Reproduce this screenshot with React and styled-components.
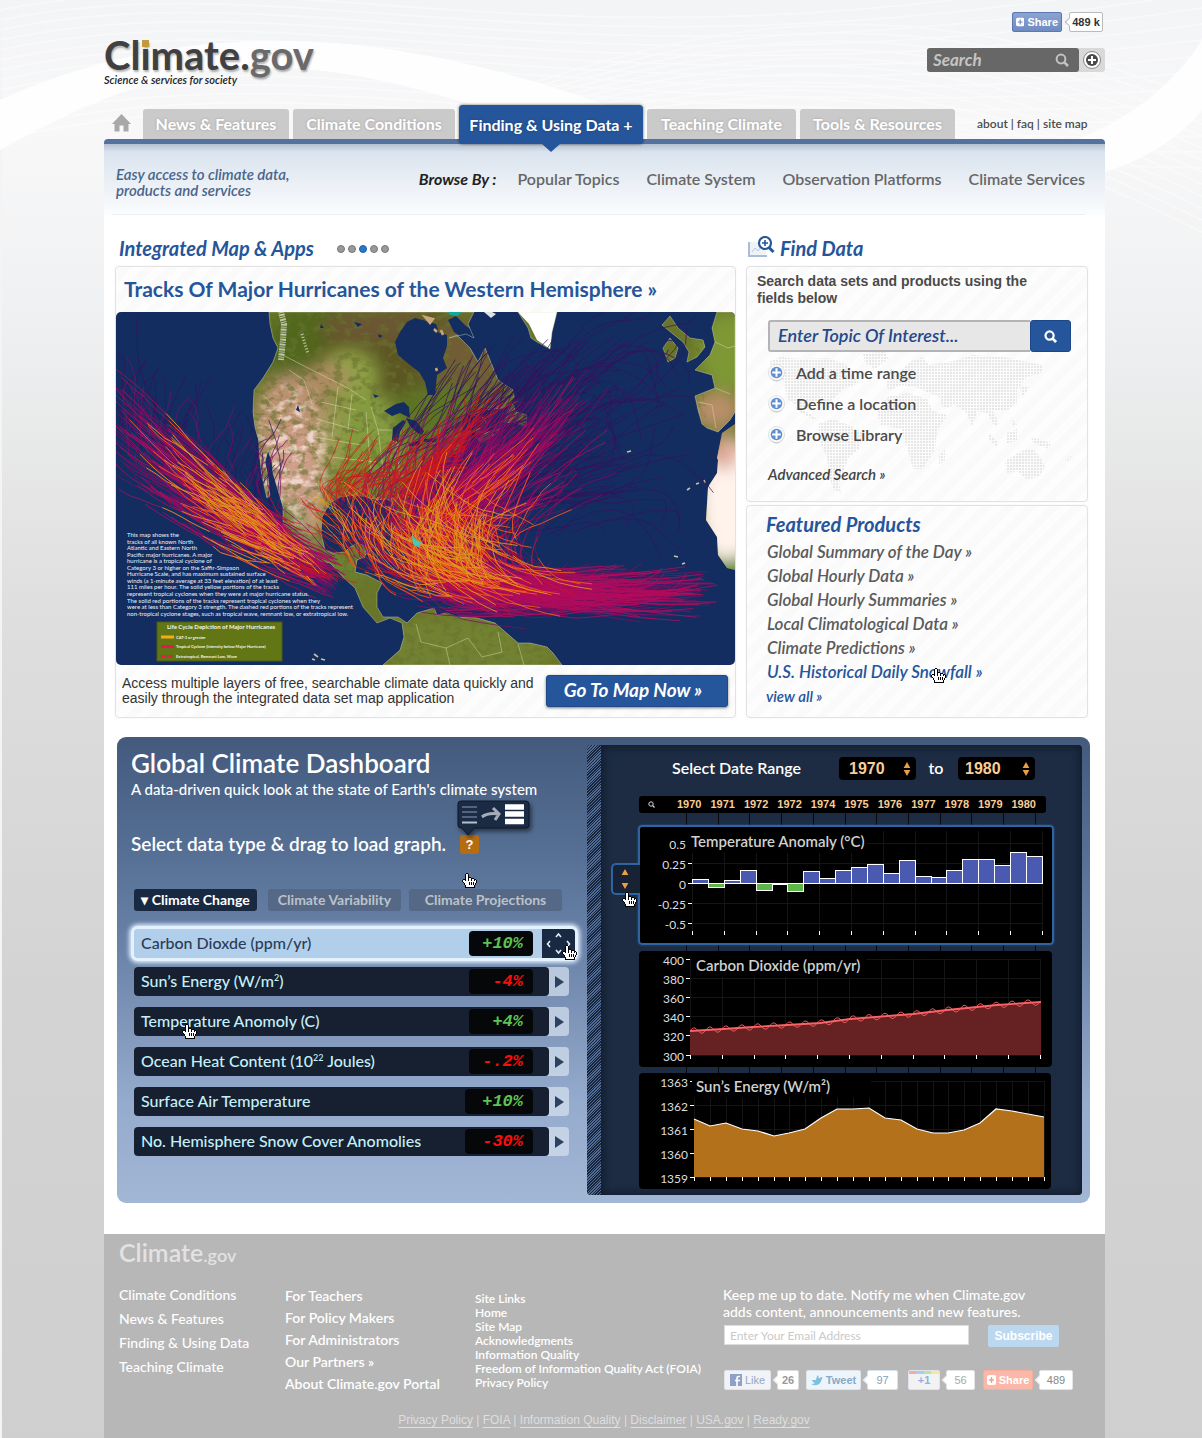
import React from "react";
import styled, { createGlobalStyle, css } from "styled-components";

const sans = `Lato, "Open Sans", sans-serif`;
const arial = `"Liberation Sans", Arial, sans-serif`;
const blue = "#25559a";

const Global = createGlobalStyle`
  *, *::before, *::after { box-sizing: border-box; }
  body { margin: 0; background: #d0d0d0; }
  a { color: inherit; text-decoration: none; }
  h1, h2, h3, p, ul { margin: 0; padding: 0; }
  ul { list-style: none; }
  button { cursor: pointer; }
`;

/* ---------- deterministic pseudo random, for the generated drawings ---------- */
function makeRandom(seed) {
  let s = seed;
  return () => {
    s = (s * 1664525 + 1013904223) % 4294967296;
    return s / 4294967296;
  };
}

/* ---------- page shell ---------- */
const Page = styled.div`
  position: relative;
  isolation: isolate;
  padding: 0 97px 0 104px;
  font-family: ${sans};
  background: linear-gradient(#f3f4f6 0, #f8f8f9 130px, #f0f1f2 300px, #dedede 620px, #d3d3d3 1000px, #cfcfcf 100%);
  box-shadow: inset 2px 0 0 #f4f4f5;
`;
const Waves = styled.svg`
  position: absolute;
  inset: 0 0 auto 0;
  width: 100%;
  height: 420px;
  z-index: -1;
`;

/* ---------- header ---------- */
const Header = styled.header`
  display: flex;
  justify-content: space-between;
  height: 104px;
`;
const Brand = styled.a`
  display: block;
  padding-top: 36px;
`;
const Logo = styled.h1`
  font: 700 40px/38px ${sans};
  color: #404042;
  text-shadow: 1px 2px 2px rgba(0, 0, 0, 0.3);
`;
const Gray = styled.span`
  color: #6a6a6c;
`;
const GoldI = styled.span`
  position: relative;
  &::before {
    content: "";
    position: absolute;
    left: 2px;
    top: 9px;
    width: 7px;
    height: 7px;
    background: #c29a3c;
  }
`;
const Motto = styled.p`
  font: italic 600 11px/12px ${sans};
  color: #222;
`;
const HeaderTools = styled.div`
  display: flex;
  flex-direction: column;
  align-items: flex-end;
  gap: 16px;
  padding-top: 12px;
`;
const ShareRow = styled.div`
  display: flex;
  gap: 7px;
  padding-right: 2px;
`;
const ShareButton = styled.button`
  display: flex;
  align-items: center;
  gap: 3px;
  width: 50px;
  height: 20px;
  padding: 0 3px;
  border: 1px solid #5a78b4;
  border-radius: 2px;
  background: linear-gradient(#8ba3d0, #6f8bc2);
  color: #fff;
  font: 700 11px/18px ${arial};
`;
const Bubble = styled.span`
  position: relative;
  display: grid;
  place-items: center;
  width: ${(p) => p.$w}px;
  height: 20px;
  border: 1px solid ${(p) => p.$line || "#bbb"};
  border-radius: 2px;
  background: #fff;
  color: ${(p) => p.$ink || "#333"};
  font: ${(p) => (p.$bold ? 700 : 400)} 11px/18px ${arial};
  &::before {
    content: "";
    position: absolute;
    left: -4px;
    top: 6px;
    width: 6px;
    height: 6px;
    background: #fff;
    border-left: 1px solid ${(p) => p.$line || "#bbb"};
    border-bottom: 1px solid ${(p) => p.$line || "#bbb"};
    transform: rotate(45deg);
  }
`;
const SiteSearch = styled.form`
  display: flex;
  width: 178px;
  height: 24px;
  border-radius: 3px;
  background: #d9d9da;
`;
const SiteSearchBox = styled.label`
  display: flex;
  align-items: center;
  width: 152px;
  padding: 0 10px 0 6px;
  border-radius: 3px;
  background: #676767;
`;
const SiteSearchInput = styled.input`
  flex: 1;
  min-width: 0;
  padding: 0;
  border: 0;
  outline: 0;
  background: none;
  color: #ddd;
  font: italic 700 17px/22px ${sans};
  &::placeholder { color: #c4c4c4; opacity: 1; }
`;
const PlusButton = styled.button`
  display: grid;
  place-items: center;
  flex: 1;
  padding: 0;
  border: 0;
  background: none;
`;

/* ---------- navigation ---------- */
const Nav = styled.nav`
  display: flex;
  align-items: flex-end;
  height: 35px;
`;
const HomeLink = styled.a`
  width: 39px;
  padding: 0 0 3px 7px;
`;
const Tab = styled.a`
  flex: 0 1 ${(p) => p.$w}px;
  display: flex;
  align-items: center;
  justify-content: center;
  height: 30px;
  margin-right: 4px;
  border-radius: 3px 3px 0 0;
  background: #cacaca;
  color: #fff;
  font: 700 16px/20px ${sans};
  white-space: nowrap;
  text-shadow: 0 0 3px rgba(0, 0, 0, 0.2);
  ${(p) =>
    p.$active &&
    css`
      position: relative;
      z-index: 2;
      height: 39px;
      margin-bottom: -5px;
      border-radius: 4px;
      background: ${blue};
      box-shadow: 0 0 3px rgba(0, 0, 0, 0.6);
      &::after {
        content: "";
        position: absolute;
        left: 50%;
        top: 39px;
        margin-left: -9px;
        border: 9px solid transparent;
        border-top: 8px solid ${blue};
        border-bottom: 0;
      }
    `}
`;
const Utility = styled.p`
  padding: 0 0 7px 18px;
  color: #4c4c4c;
  font: 600 12px/16px ${sans};
  white-space: nowrap;
`;

/* ---------- content sheet ---------- */
const Sheet = styled.main`
  display: flow-root;
  background: #fff;
  border-top: 5px solid #5472a0;
  border-radius: 4px 4px 0 0;
`;
const SubHeader = styled.section`
  padding: 0 20px 0 8px;
  background: linear-gradient(rgba(60, 80, 110, 0.22), transparent 8px), linear-gradient(#d6e0ec, #ffffff 78px);
`;
const SubHeaderInner = styled.div`
  display: flex;
  align-items: flex-start;
  justify-content: space-between;
  height: 71px;
  padding: 22px 0 0 4px;
  border-bottom: 1px solid #eceff3;
`;
const Lead = styled.p`
  width: 200px;
  color: #4a658c;
  font: italic 600 15px/16px ${sans};
`;
const Browse = styled.div`
  display: flex;
  gap: 27px;
  padding-top: 3px;
  color: #666;
  font: 600 16px/20px ${sans};
  white-space: nowrap;
`;
const BrowseLabel = styled.span`
  margin-right: -6px;
  color: #222;
  font-style: italic;
  font-weight: 700;
`;
const Columns = styled.div`
  display: grid;
  grid-template-columns: 621fr 342fr;
  gap: 10px;
  padding: 0 17px 19px 11px;
`;
const Column = styled.section`
  display: flex;
  flex-direction: column;
  min-width: 0;
`;
const HeadingRow = styled.div`
  display: flex;
  align-items: center;
  gap: ${(p) => p.$gap}px;
  height: 51px;
  padding: 15px 0 0 ${(p) => p.$inset}px;
`;
const Heading = styled.h2`
  color: ${blue};
  font: italic 700 20px/24px ${sans};
  white-space: nowrap;
`;
const Dots = styled.div`
  display: flex;
  gap: 3px;
  padding-top: 2px;
`;
const Dot = styled.button`
  width: 8px;
  height: 8px;
  padding: 0;
  border: 1px solid ${(p) => (p.$on ? "#1b5fae" : "#777")};
  border-radius: 50%;
  background: ${(p) => (p.$on ? "#2a78c8" : "#999")};
`;
const Card = styled.div`
  border: 1px solid #e2e2e2;
  border-radius: 4px;
  background: repeating-linear-gradient(-45deg, #fdfdfd 0 8px, #fafafa 8px 16px);
  box-shadow: 0 0 2px #eee;
`;
const MapCard = styled(Card)`
  height: 452px;
`;
const MapTitle = styled.h3`
  padding: 7px 0 8px 8px;
  color: ${blue};
  font: 700 21px/30px ${sans};
`;
const MapSvg = styled.svg`
  display: block;
  width: 100%;
  height: 353px;
  border-radius: 5px;
`;
const MapFoot = styled.div`
  display: flex;
  align-items: flex-start;
  justify-content: space-between;
  padding: 10px 7px 0 6px;
`;
const MapText = styled.p`
  padding-top: 1px;
  color: #333;
  font: 400 14px/15px ${arial};
`;
const GoButton = styled.button`
  width: 182px;
  height: 32px;
  padding: 0 8px 2px 0;
  border: 1px solid #1e4a88;
  border-radius: 3px;
  background: ${blue};
  box-shadow: 0 1px 3px rgba(0, 0, 0, 0.5);
  color: #fff;
  font: italic 700 19px/24px ${sans};
  white-space: nowrap;
`;

/* ---------- find data ---------- */
const FindCard = styled(Card)`
  position: relative;
  height: 236px;
  margin-bottom: 3px;
  padding: 6px 16px 0 10px;
`;
const World = styled.svg`
  position: absolute;
  left: 20px;
  top: 84px;
`;
const FindIntro = styled.p`
  width: 290px;
  color: #4a4a4a;
  font: 700 14px/17px ${arial};
`;
const TopicForm = styled.form`
  position: relative;
  display: flex;
  height: 32px;
  margin: 13px 0 5px 11px;
`;
const TopicInput = styled.input`
  flex: 1;
  min-width: 0;
  padding: 0 8px 2px;
  border: 2px solid #b4b4b4;
  border-right: 0;
  border-radius: 3px 0 0 3px;
  background: #e7e7e7;
  outline: 0;
  font: italic 600 18px/24px ${sans};
  &::placeholder { color: #25488a; opacity: 1; }
`;
const TopicButton = styled.button`
  display: grid;
  place-items: center;
  width: 41px;
  padding: 0;
  border: 1px solid #1d478a;
  border-radius: 3px;
  background: ${blue};
`;
const FindList = styled.ul`
  position: relative;
  margin-left: 11px;
`;
const FindLink = styled.a`
  display: flex;
  align-items: center;
  gap: 11px;
  height: 31px;
  color: #4b4b4b;
  font: 600 16px/20px ${sans};
`;
const Advanced = styled.a`
  position: relative;
  display: block;
  margin: 14px 0 0 11px;
  color: #444;
  font: italic 600 15px/20px ${sans};
`;
const FeaturedCard = styled(Card)`
  height: 213px;
  padding: 6px 20px 0 19px;
`;
const FeaturedList = styled.ul`
  padding: 4px 0 0 1px;
  color: #5b5b5b;
  font: italic 600 17px/24px ${sans};
  white-space: nowrap;
`;
const FeaturedItem = styled.li`
  position: relative;
  width: max-content;
  color: ${(p) => (p.$hot ? blue : "inherit")};
`;
const ViewAll = styled.a`
  color: ${blue};
  font: italic 600 15px/24px ${sans};
`;

/* ---------- dashboard ---------- */
const Dashboard = styled.section`
  display: grid;
  grid-template-columns: 470fr 495fr;
  margin: 0 15px 31px 13px;
  padding: 8px 8px 8px 0;
  border-radius: 9px;
  background: linear-gradient(#435a7d, #556f94 24%, #6b83a8 46%, #95abcd 78%, #a2b6d5);
`;
const Picker = styled.div`
  padding: 2px 0 0 14px;
  color: #fff;
`;
const DashTitle = styled.h2`
  font: 600 26px/32px ${sans};
`;
const DashSub = styled.p`
  font: 500 15px/20px ${sans};
`;
const DragLine = styled.p`
  display: flex;
  align-items: center;
  gap: 14px;
  margin-top: 31px;
  font: 600 19px/28px ${sans};
  white-space: nowrap;
`;
const Help = styled.button`
  position: relative;
  width: 19px;
  height: 19px;
  padding: 0;
  border: 0;
  border-radius: 3px;
  background: #b56d12;
  color: #fff;
  font: 700 13px/19px ${arial};
`;
const Tip = styled.svg`
  position: absolute;
  left: -3px;
  top: -35px;
  overflow: visible;
  filter: drop-shadow(2px 3px 2px rgba(0, 0, 0, 0.5));
`;
const TypeTabs = styled.div`
  display: flex;
  gap: 8px;
  margin: 31px 0 18px 3px;
`;
const TypeTab = styled.button`
  width: ${(p) => p.$w}px;
  height: 22px;
  padding: 0;
  border: 0;
  border-radius: 3px;
  background: ${(p) => (p.$on ? "#1a2942" : "#556885")};
  color: ${(p) => (p.$on ? "#fff" : "#bcc2cb")};
  font: 700 14px/22px ${sans};
  white-space: nowrap;
  &:first-child { margin-right: 3px; }
`;
const Rows = styled.ul`
  display: flex;
  flex-direction: column;
  gap: 11px;
  margin: 0 18px 0 3px;
`;
const Row = styled.li`
  position: relative;
  display: flex;
  height: 29px;
  border-radius: 4px;
  background: rgba(213, 224, 238, 0.72);
  ${(p) =>
    p.$active &&
    css`
      margin: 0 -6px -2px 0;
      background: #b1cfeb;
      box-shadow: 0 0 0 3px #e4f1ff, 0 0 4px 5px #dcecff;
    `}
`;
const RowBody = styled.div`
  display: flex;
  flex: 1;
  align-items: center;
  justify-content: space-between;
  min-width: 0;
  padding: 0 ${(p) => (p.$active ? 9 : 16)}px 0 7px;
  border-radius: 4px;
  background: ${(p) => (p.$active ? "#b1cfeb" : "#162031")};
  color: ${(p) => (p.$active ? "#2a3c56" : "#c5f0fb")};
  font: 500 16px/20px ${sans};
  white-space: nowrap;
  sup { font-size: 9px; line-height: 1; }
`;
const RowLabel = styled.span`
  padding-bottom: 2px;
`;
const Led = styled.output`
  width: ${(p) => (p.$wide ? 68 : 64)}px;
  height: 25px;
  padding-right: 10px;
  border-radius: 4px;
  background: #060708;
  color: ${(p) => (p.$up ? "#5cc452" : "#fb0d0d")};
  font: italic 700 17px/25px "Liberation Mono", monospace;
  text-align: right;
`;
const RowButton = styled.button`
  display: grid;
  place-items: center;
  width: ${(p) => (p.$active ? 33 : 20)}px;
  padding: 0;
  border: 0;
  border-radius: 0 4px 4px 0;
  background: ${(p) => (p.$active ? "#1a2942" : "transparent")};
`;
const Hand = styled.svg`
  position: absolute;
  left: ${(p) => p.$x}px;
  top: ${(p) => p.$y}px;
  z-index: 3;
  pointer-events: none;
`;

const Viewer = styled.div`
  display: flex;
  border-radius: 4px;
  overflow: hidden;
  background: #1d2c43;
`;
const Hatch = styled.div`
  width: 14px;
  background: repeating-linear-gradient(-45deg, #17243a 0 1px, #4f6b95 1px 2px);
`;
const ViewerBody = styled.div`
  flex: 1;
  min-width: 0;
  padding: 12px 28px 6px 37px;
  box-shadow: inset 0 0 9px 2px #111c2e;
`;
const DateRow = styled.div`
  display: flex;
  align-items: center;
  height: 23px;
  margin: 0 19px 16px 34px;
  color: #fff;
  font: 600 16px/20px ${sans};
`;
const DateLabel = styled.span`
  flex: 1;
  padding-bottom: 2px;
  white-space: nowrap;
`;
const To = styled.span`
  width: 42px;
  padding: 0 2px 2px 0;
  text-align: center;
`;
const YearBox = styled.label`
  display: flex;
  align-items: center;
  justify-content: space-between;
  width: 77px;
  height: 23px;
  padding: 0 5px 0 ${(p) => p.$inset}px;
  border-radius: 4px;
  background: #000;
`;
const YearSelect = styled.select`
  flex: 1;
  min-width: 0;
  padding: 0 2px;
  border: 0;
  outline: 0;
  appearance: none;
  background: none;
  color: #f9cd96;
  font: 700 16px/22px ${arial};
`;
const Timeline = styled.div`
  display: flex;
  align-items: center;
  justify-content: space-between;
  height: 17px;
  margin: 0 8px 0 1px;
  padding: 0 10px 0 9px;
  border-radius: 3px;
  background: #000;
  color: #f9cd96;
  font: 700 11px/17px ${arial};
  svg { margin-right: 13px; }
`;
const Rungs = styled.div`
  display: flex;
  justify-content: space-between;
  height: ${(p) => p.$h}px;
  margin: 0 18px 0 48px;
`;
const Rung = styled.i`
  width: 1px;
  background: #05080e;
`;
const ChartFrame = styled.figure`
  position: relative;
  margin: 0 ${(p) => p.$right}px 0 ${(p) => (p.$active ? 0 : 1)}px;
  border-radius: 4px;
  background: #000;
  ${(p) => p.$active && css`box-shadow: inset 0 0 0 2px #2f64a0, 0 0 2px #2f64a0;`}
  > svg:last-child { display: block; width: 100%; }
`;
const DragTab = styled.button`
  position: absolute;
  left: -27px;
  top: 38px;
  display: grid;
  place-items: center;
  width: 29px;
  height: 32px;
  padding: 0 4px 0 0;
  border: 2px solid #2f64a0;
  border-right: 0;
  border-radius: 5px 0 0 5px;
  background: #172234;
`;

/* ---------- footer ---------- */
const Footer = styled.footer`
  display: grid;
  grid-template-columns: 166px 190px 248px 1fr;
  padding: 4px 14px 12px 15px;
  background: #b7b7b7;
  color: #fff;
  font: 500 14px/24px ${sans};
`;
const FootLogo = styled.p`
  grid-column: 1 / -1;
  height: 45px;
  color: #e2e2e2;
  font: 600 25px/28px ${sans};
  small { font-size: 18px; }
`;
const FootList = styled.ul`
  padding-top: ${(p) => p.$top || 0}px;
  font-size: ${(p) => p.$size}px;
  font-weight: ${(p) => p.$weight};
  line-height: ${(p) => p.$line}px;
  white-space: nowrap;
`;
const News = styled.form`
  padding-top: 3px;
`;
const NewsText = styled.label`
  display: block;
  font: 500 14px/17px ${sans};
  white-space: nowrap;
`;
const NewsRow = styled.div`
  display: flex;
  align-items: flex-start;
  gap: 19px;
  margin-top: 5px;
  padding-left: 1px;
`;
const Email = styled.input`
  width: 245px;
  height: 20px;
  padding: 0 5px;
  border: 1px solid #ddd;
  background: #fff;
  font: 400 12px/18px ${sans};
  &::placeholder { color: #c9c9c9; opacity: 1; }
`;
const Subscribe = styled.button`
  width: 71px;
  height: 22px;
  padding: 0;
  border: 0;
  border-radius: 2px;
  background: #bcd8f0;
  color: #fff;
  font: 700 12px/22px ${arial};
`;
const Social = styled.div`
  display: flex;
  margin-top: 23px;
  padding-left: 1px;
`;
const SocialButton = styled.button`
  display: flex;
  align-items: center;
  justify-content: center;
  gap: 3px;
  width: ${(p) => p.$w}px;
  height: 20px;
  margin-right: 6px;
  padding: 0;
  border: 1px solid ${(p) => p.$line || "#dfe3ea"};
  border-radius: 2px;
  background: ${(p) => p.$bg || "#f1f3f7"};
  color: ${(p) => p.$ink};
  font: ${(p) => (p.$bold ? 700 : 400)} 11px/18px ${arial};
`;
const SocialPair = styled.div`
  display: flex;
  margin-right: ${(p) => p.$gap}px;
`;
const Legal = styled.p`
  grid-column: 1 / -1;
  margin-top: 17px;
  padding-right: 2px;
  color: #dedede;
  text-align: center;
  font: 400 12px/16px ${arial};
  a { text-decoration: underline; text-underline-offset: 3px; }
`;

/* ---------- small drawings ---------- */
const HAND = [
  "....XX.........",
  "...XooX........",
  "...XooX........",
  "...XooX........",
  "...XooXXX......",
  "...XooXooXXX...",
  ".XXXooXooXooXX.",
  "XooXooXooXooXoX",
  "XoooooooooooooX",
  ".XoooooXoXoXooX",
  "..XooooXoXoXoX.",
  "..XooooXoXoXoX.",
  "...XooooooooX..",
  "...XooooooooX..",
  "...XXXXXXXXXX..",
];
function HandCursor({ x, y }) {
  return (
    <Hand $x={x} $y={y} width="15" height="15" viewBox="0 0 15 15" shapeRendering="crispEdges" aria-hidden="true">
      {HAND.map((line, r) =>
        [...line].map((c, i) => (c === "." ? null : <rect key={`${r}-${i}`} x={i} y={r} width="1" height="1" fill={c === "X" ? "#000" : "#fff"} />))
      )}
    </Hand>
  );
}
const Lens = ({ size = 14, color = "#fff", w = 2 }) => (
  <svg width={size} height={size} viewBox="0 0 14 14" fill="none" stroke={color} strokeWidth={w} aria-hidden="true">
    <circle cx="6" cy="6" r="4.4" />
    <path d="M9.3 9.3 13 13" strokeWidth={w + 0.6} />
  </svg>
);
const PlusDisc = () => (
  <svg width="17" height="18" viewBox="0 0 17 18" aria-hidden="true">
    <circle cx="8.5" cy="9.6" r="7.8" fill="#b9b9b9" />
    <circle cx="8.5" cy="8.5" r="8" fill="#fafafa" stroke="#d5d5d5" strokeWidth=".6" />
    <circle cx="8.5" cy="8.5" r="5.8" fill="#5f8fd0" />
    <path d="M8.5 4.2v8.6M4.2 8.5h8.6" stroke="#fff" strokeWidth="2" />
  </svg>
);
const UpDown = ({ gap = 0 }) => (
  <svg width="8" height={16 + gap} viewBox={`0 0 8 ${16 + gap}`} fill="#e99f45" aria-hidden="true">
    <path d="M4 1 7.4 7H.6z" />
    <path d={`M4 ${15 + gap} 7.4 ${9 + gap}H.6z`} />
  </svg>
);

/* ---------- hurricane map ---------- */
const AMERICA =
  "M153 0 154 12 157 26 162 36 157 50 147 66 138 78 137 100 139 115 142 126 144 148 146 165 151 186 154 184 152 165 149 150 152 138 156 150 157 161 162 178 167 195 167 215 181 231 197 248 214 251 227 265 239 276 247 295 261 311 274 306 286 311 288 325 284 338 267 353 446 353 437 341 431 335 414 331 402 331 387 318 379 311 361 306 341 305 331 301 321 303 318 296 301 301 291 311 282 305 267 305 261 295 261 281 266 271 251 263 239 260 241 248 249 245 251 235 242 231 234 235 229 240 217 241 209 238 205 221 206 205 214 191 224 185 241 183 251 185 261 188 271 187 279 193 281 205 284 215 289 216 292 208 291 195 301 178 314 165 317 150 324 146 331 143 342 140 344 130 357 120 371 113 368 106 357 103 366 98 387 96 399 90 397 78 382 68 376 53 369 36 362 50 354 36 341 23 333 26 350 22 358 26 352 12 358 0Z";
const EAST = [
  "M402 0 412 16 415 26 421 30 434 37 436 20 441 0Z",
  "M387 110 391 100 396 90 400 100 411 103 410 115 400 111Z",
  "M360 126 372 120 384 116 378 124 366 131Z",
  "M547 36 554 26 562 36 559 46 552 50Z",
  "M546 13 554 4 562 16 574 26 587 28 589 35 581 45 571 50 573 40 567 30 557 22Z",
  "M601 0 596 16 599 30 594 43 579 58 596 63 599 76 579 84 582 98 586 112 591 116 602 120 614 108 619 100 619 0Z",
];
const AFRICA = "M619 112 606 121 601 146 602 148 601 161 592 175 590 208 601 225 602 243 611 256 619 258Z";
const ISLANDS = "M277 238 290 236 305 244 316 250 308 251 292 243ZM316 257 328 255 341 262 330 265 318 262ZM348 262 356 262 355 266 348 266ZM298 261 306 262 303 265Z";
const WATERS = [
  "M299 6 291 10 284 20 279 30 282 43 294 53 303 60 309 70 312 83 319 83 321 63 331 56 327 46 331 34 331 23 323 21 320 12 314 10Z",
  "M332 8 340 4 350 14 362 22 369 34 364 46 356 36 348 27 338 20Z",
  "M268 99 280 92 288 90 293 95 294 106 284 101 276 104Z",
  "M276 128 277 116 287 108 290 110 284 120 282 130Z",
  "M290 106 300 109 308 119 306 123 300 120 294 114Z",
  "M292 132 304 128 304 132 294 135ZM308 127 321 126 320 130 308 130Z",
  "M352 104 366 96 388 97 384 106 394 112 378 116 362 116 350 120 342 128 348 114Z",
  "M182 93 184 100 180 98ZM257 82 263 84 259 86ZM238 10l8 2-4 3ZM205 12l3 4-4 0ZM262 22l5 2-4 2Z",
];

function curve(p, n = 14) {
  const out = [];
  for (let i = 0; i <= n; i++) {
    const t = i / n;
    const u = 1 - t;
    out.push([
      u * u * u * p[0][0] + 3 * u * u * t * p[1][0] + 3 * u * t * t * p[2][0] + t * t * t * p[3][0],
      u * u * u * p[0][1] + 3 * u * u * t * p[1][1] + 3 * u * t * t * p[2][1] + t * t * t * p[3][1],
    ]);
  }
  return out;
}
function buildTracks() {
  const rnd = makeRandom(77);
  const span = (a, b) => a + rnd() * (b - a);
  const bell = (a, b) => a + ((rnd() + rnd() + rnd()) / 3) * (b - a);
  const groups = { dark: "", purple: "", magenta: "", red: "", orange: "", yellow: "" };
  const add = (key, pts) => {
    if (pts.length < 2) return;
    groups[key] += "M" + pts.map(([x, y]) => `${x.toFixed(1)} ${y.toFixed(1)}`).join("L");
  };
  /* a slow sideways sway keeps neighbouring storms from running parallel */
  const sway = (pts, size) => {
    const a = span(0, 6.3);
    const f = span(0.3, 0.75);
    const g = span(0.2, 0.6);
    return pts.map(([x, y], i) => [x + Math.sin(a + i * f) * size + span(-0.7, 0.7), y + Math.cos(a * 2 + i * g) * size + span(-0.7, 0.7)]);
  };
  /* eastern Pacific */
  for (let i = 0; i < 300; i++) {
    const a = span(0, 0.62);
    const off = bell(-42, 42);
    const x0 = 222 - a * 130 + off * 0.35;
    const y0 = 274 - a * 106 - off * 0.6;
    const len = span(50, 180);
    const x3 = Math.max(x0 - len, -6);
    const y3 = y0 - (x0 - x3) * span(0.42, 0.95);
    const pts = sway(curve([[x0, y0], [x0 - len * 0.3, y0 - len * 0.16], [x3 + len * 0.3, y3 + len * 0.26], [x3, y3]]), 3);
    add(rnd() < 0.6 ? "purple" : "magenta", pts);
    if (rnd() < 0.5) {
      const s = 2 + Math.floor(rnd() * 6);
      add(rnd() < 0.5 ? "orange" : "yellow", pts.slice(s, s + 4 + Math.floor(rnd() * 4)));
    }
  }
  for (let i = 0; i < 60; i++) {
    const x = span(0, 165);
    const y = 92 + x * 0.5 + span(-24, 20);
    add(i % 3 ? "dark" : "purple", sway(curve([[x, y + 30], [x - 6, y + 12], [x + span(-5, 15), y - 5], [x + span(-12, 34), y - span(14, 44)]]), 2));
  }
  add("dark", sway(curve([[50, 150], [44, 90], [12, 50], [22, 2]], 16), 1));
  add("dark", sway(curve([[14, 90], [-4, 66], [16, 56], [4, 40]], 10), 1));
  /* Atlantic: westward along the trades, then curving north-east */
  for (let i = 0; i < 360; i++) {
    const x0 = 600 - Math.pow(rnd(), 0.9) * 250;
    const y0 = bell(244, 316);
    const turn = bell(215, 425);
    const x3 = turn + span(20, 175);
    const y3 = span(24, 190) + Math.max(0, 400 - x3) * 0.34;
    const pts = sway(curve([[x0, y0], [turn + span(-40, 20), bell(262, 325)], [turn + span(-80, -10), bell(140, 245)], [x3, y3]], 24), span(1.5, 5));
    add(rnd() < 0.6 ? "purple" : "magenta", pts.slice(0, 12));
    add(rnd() < 0.7 ? "purple" : "magenta", pts.slice(11, 22));
    add("dark", pts.slice(21));
    const s = 3 + Math.floor(rnd() * 11);
    const pick = rnd();
    if (pick < 0.22) add("red", pts.slice(s, s + 7));
    else if (pick < 0.46) add("orange", pts.slice(s, s + 7));
    else if (pick < 0.66) add("yellow", pts.slice(s + 1, s + 7));
  }
  /* north-east runs off the coast */
  for (let i = 0; i < 110; i++) {
    const x = bell(310, 430);
    const y = 205 - (x - 310) * 0.55 + bell(-38, 38);
    const k = span(40, 100);
    const pts = sway(curve([[x - k * 0.5, y + k * 0.42], [x - 8, y + 8], [x + k * 0.3, y - k * 0.2], [x + k * 0.8, y - k * span(0.5, 1.1)]], 12), 2.5);
    add(i % 3 ? "purple" : "magenta", pts);
    if (i % 5 === 0) add("orange", pts.slice(1, 8));
  }
  /* low track band reaching toward Africa */
  for (let i = 0; i < 70; i++) {
    const x = span(380, 530);
    const y = bell(268, 310);
    add(rnd() < 0.6 ? "purple" : "magenta", sway(curve([[x + span(40, 75), y - span(4, 30)], [x + 30, y], [x - 30, y + 6], [x - span(50, 100), y - span(-4, 14)]]), 1.5));
  }
  /* Caribbean and Gulf of Mexico */
  for (let i = 0; i < 120; i++) {
    const x = bell(245, 400);
    const y = span(190, 280);
    const key = ["orange", "yellow", "red", "purple"][Math.floor(rnd() * 4)];
    add(key, sway(curve([[x + 40, y + span(4, 24)], [x + 16, y + 8], [x - 6, y], [x - span(6, 46), y - span(6, 44)]], 9), 2.5));
  }
  for (let i = 0; i < 60; i++) {
    const x = span(212, 280);
    const y = span(188, 232);
    add(rnd() < 0.45 ? "yellow" : rnd() < 0.6 ? "orange" : "purple", sway(curve([[x + 18, y + 26], [x + 8, y + 10], [x, y], [x + span(-26, 14), y - span(4, 24)]], 8), 2));
  }
  /* decaying storms over the continent */
  for (let i = 0; i < 64; i++) {
    const x = span(205, 300);
    const y = 186 - Math.max(0, x - 285) * 0.6 + span(-4, 8);
    add("red", sway(curve([[x, y], [x + span(-12, 8), y - 14], [x + span(0, 20), y - 24], [x + span(10, 70), y - span(16, 70)]], 9), 3));
  }
  for (let i = 0; i < 46; i++) {
    const x = span(285, 345);
    const y = 190 - (x - 285) * 0.9 + span(-8, 8);
    add("red", sway(curve([[x, y], [x + 6, y - 12], [x + 16, y - 24], [x + span(14, 55), y - span(20, 66)]], 9), 3));
  }
  for (let i = 0; i < 26; i++) {
    const x = span(160, 240);
    const y = span(180, 262);
    add("red", sway(curve([[x + 24, y + 8], [x + 10, y + 4], [x, y], [x - span(4, 24), y - span(2, 26)]], 7), 1.5));
  }
  /* open ocean wanderers */
  for (let i = 0; i < 50; i++) {
    const x = span(400, 545);
    const y = span(14, 200);
    add("dark", sway(curve([[x - 50, y + 30], [x, y + span(-40, 40)], [x + 40, y + span(-50, 30)], [x + span(10, 70), y + span(-60, 60)]]), 4));
  }
  return groups;
}
const TRACKS = buildTracks();
const MAP_NOTE = [
  "This map shows the",
  "tracks of all known North",
  "Atlantic and Eastern North",
  "Pacific major hurricanes. A major",
  "hurricane is a tropical cyclone of",
  "Category 3 or higher on the Saffir-Simpson",
  "Hurricane Scale, and has maximum sustained surface",
  "winds (a 1-minute average at 33 feet elevation) of at least",
  "111 miles per hour. The solid yellow portions of the tracks",
  "represent tropical cyclones when they were at major hurricane status.",
  "The solid red portions of the tracks represent tropical cyclones when they",
  "were at less than Category 3 strength. The dashed red portions of the tracks represent",
  "non-tropical cyclone stages, such as tropical wave, remnant low, or extratropical low.",
];

function HurricaneMap() {
  return (
    <MapSvg viewBox="0 0 619 353" preserveAspectRatio="xMidYMid slice" role="img" aria-label="Hurricane tracks">
      <defs>
        <clipPath id="land">
          <path d={AMERICA} />
          {EAST.map((d) => <path key={d} d={d} />)}
          <path d={AFRICA} />
          <path d={ISLANDS} />
        </clipPath>
        <filter id="soft" x="-30%" y="-30%" width="160%" height="160%"><feGaussianBlur stdDeviation="8" /></filter>
        <filter id="grain" x="0" y="0" width="100%" height="100%">
          <feTurbulence type="fractalNoise" baseFrequency="0.11 0.14" numOctaves="5" seed="8" />
          <feColorMatrix values="0 0 0 0 0.14  0 0 0 0 0.17  0 0 0 0 0.03  0 0 0 5 -2.4" />
        </filter>
        <filter id="dust" x="0" y="0" width="100%" height="100%">
          <feTurbulence type="fractalNoise" baseFrequency="0.08 0.12" numOctaves="5" seed="21" />
          <feColorMatrix values="0 0 0 0 0.93  0 0 0 0 0.74  0 0 0 0 0.68  0 0 0 4 -1.9" />
        </filter>
        <radialGradient id="fade">
          <stop offset=".55" stopColor="#fff" />
          <stop offset="1" stopColor="#000" />
        </radialGradient>
        <mask id="west"><ellipse cx="174" cy="142" rx="46" ry="84" fill="url(#fade)" /></mask>
      </defs>
      <rect width="619" height="353" fill="#132d61" />
      <g clipPath="url(#land)">
        <rect width="619" height="353" fill="#6a7628" />
        <g filter="url(#soft)">
          <ellipse cx="205" cy="40" rx="60" ry="50" fill="#51671c" />
          <ellipse cx="290" cy="45" rx="90" ry="50" fill="#5c5722" />
          <ellipse cx="350" cy="50" rx="44" ry="44" fill="#6f5c36" />
          <ellipse cx="260" cy="14" rx="56" ry="18" fill="#6b5730" />
          <ellipse cx="232" cy="64" rx="30" ry="26" fill="#8ea044" />
          <ellipse cx="175" cy="110" rx="36" ry="48" fill="#bb9272" />
          <ellipse cx="178" cy="160" rx="30" ry="44" fill="#d09f8a" />
          <ellipse cx="212" cy="66" rx="22" ry="14" fill="#b08c64" />
          <ellipse cx="197" cy="195" rx="12" ry="36" fill="#c59c84" />
          <ellipse cx="176" cy="214" rx="9" ry="30" fill="#6f8838" />
          <ellipse cx="218" cy="130" rx="18" ry="40" fill="#a09a58" />
          <ellipse cx="255" cy="125" rx="34" ry="44" fill="#849b3f" />
          <ellipse cx="255" cy="165" rx="40" ry="22" fill="#73922f" />
          <ellipse cx="325" cy="100" rx="50" ry="28" fill="#5c7423" />
          <ellipse cx="350" cy="335" rx="90" ry="32" fill="#728233" />
          <ellipse cx="220" cy="255" rx="40" ry="14" fill="#6c8433" />
          <ellipse cx="612" cy="40" rx="30" ry="40" fill="#7e9834" />
          <ellipse cx="600" cy="98" rx="26" ry="18" fill="#b98f6b" />
          <ellipse cx="612" cy="190" rx="30" ry="66" fill="#fff3ec" />
          <ellipse cx="608" cy="140" rx="14" ry="18" fill="#dda593" />
          <ellipse cx="616" cy="256" rx="16" ry="10" fill="#5c8a2c" />
        </g>
        <rect width="590" height="353" filter="url(#grain)" opacity=".6" />
        <g mask="url(#west)"><rect x="120" y="50" width="110" height="180" filter="url(#dust)" opacity=".85" /></g>
        <path d="M402 0H441L434 37 421 28 413 12Z" fill="#fff" />
        <path d="M165 0 168 12 167 28 165 48" stroke="#e9efea" strokeWidth="6" strokeDasharray="1 1 2 1" fill="none" opacity=".7" />
        <path d="M186 22 192 42" stroke="#e9efea" strokeWidth="3" strokeDasharray="1 2" fill="none" opacity=".7" />
        <path d="M147 83 165 100 M173 58 188 68 196 92 M165 42 190 55 232 76 250 88 M205 90 240 98 M201 107 243 119 M198 125 245 133 M222 75 216 125 M236 82 232 118 M250 100 255 160 M215 145 260 150 M262 118 268 165 M280 120 284 168 M255 95 262 118 276 118" stroke="#dcd8ae" strokeWidth=".8" fill="none" opacity=".65" />
        <path d="M300 312 305 330 330 336 352 326 M352 326 366 345 386 340 382 320 M330 336 334 353 M402 332 408 353 M599 30 612 36 619 34 M582 90 596 93 600 116 M599 76 614 82" stroke="#d8dcae" strokeWidth=".8" fill="none" opacity=".6" />
      </g>
      {WATERS.map((d) => <path key={d} d={d} fill="#132d61" />)}
      <path d={AMERICA} fill="none" stroke="#c9cfae" strokeWidth=".7" opacity=".65" />
      {EAST.map((d) => <path key={d} d={d} fill="none" stroke="#d4d8b4" strokeWidth=".7" opacity=".6" />)}
      <path d="M309 5 317 7 314 11Z M318 17 321 20M325 18l2 5M320 56l1 3" stroke="#c9a67e" strokeWidth="2.500" fill="#c9a67e" />
      <path d="M332 0 346 0 341 4 334 3Z" fill="#12a89a" />
      <path d="M368 0 375 6 380 2 376 0Z" fill="#dfe3e0" />
      <path d="M198 342l4 3M196 347l3 1M205 347l4 1M571 178l3-2M580 172l3-1M588 168l1 3M558 244l4 1M566 252l3-1M511 140l4-1" stroke="#c8c2a2" strokeWidth="1.6" />
      <g fill="none" strokeLinejoin="round">
        <path d={TRACKS.dark} stroke="#35145c" strokeWidth=".9" opacity=".8" />
        <path d={TRACKS.purple} stroke="#7c1064" strokeWidth=".9" opacity=".85" />
        <path d={TRACKS.magenta} stroke="#b30d5c" strokeWidth=".9" opacity=".85" />
        <path d={TRACKS.red} stroke="#cf1a1d" strokeWidth=".9" opacity=".75" />
        <path d={TRACKS.orange} stroke="#f0601a" strokeWidth="1" opacity=".85" />
        <path d={TRACKS.yellow} stroke="#dd9c1c" strokeWidth="1" opacity=".85" />
      </g>
      <path d="M296 222l4 6 5 2-2 6-6-4Z" fill="#35d0c8" opacity=".9" />
      <g fill="#eef1f8" fontFamily={sans} fontSize="6">
        {MAP_NOTE.map((t, i) => <text key={t} x="11" y={225 + Math.round(i * 6.55)}>{t}</text>)}
      </g>
      <rect x="41" y="310" width="125" height="39" fill="#637615" stroke="#4c5b10" />
      <g fill="#f5f5e6" fontFamily={sans} fontWeight="700">
        <text x="51" y="317" fontSize="6">Life Cycle Depiction of Major Hurricanes</text>
        <text x="60" y="327" fontSize="4">CAT-3 or greater</text>
        <text x="60" y="336" fontSize="4">Tropical Cyclone (Intensity below Major Hurricane)</text>
        <text x="60" y="346" fontSize="4">Extratropical, Remnant Low, Wave</text>
      </g>
      <path d="M45 325h13" stroke="#f5ad13" strokeWidth="3" />
      <path d="M45 334.500h13" stroke="#ee1450" strokeWidth="3" />
      <path d="M45 344.500h13" stroke="#ee1450" strokeWidth="3" strokeDasharray="2 1" />
    </MapSvg>
  );
}

/* ---------- dotted world ---------- */
function DottedWorld() {
  return (
    <World width="312" height="142" viewBox="0 0 312 142" aria-hidden="true">
      <defs>
        <pattern id="dots" width="3" height="3" patternUnits="userSpaceOnUse">
          <rect width="2" height="2" fill="#e7e7e7" />
        </pattern>
      </defs>
      <g fill="url(#dots)">
        <path d="M3 10 14 6 34 8 62 7 80 14 84 22 92 32 76 38 66 48 60 54 46 50 42 58 32 56 20 48 18 34 14 24 4 20Z" />
        <path d="M96 2 118 1 122 8 108 18 98 12ZM30 56 42 62 52 70 46 68 34 62Z" />
        <path d="M52 72 66 68 82 74 96 82 92 98 82 106 76 120 72 132 74 142 66 138 62 124 60 106 52 90Z" />
        <path d="M122 40 118 32 132 22 144 10 156 6 162 14 186 10 206 4 236 6 276 14 274 22 260 26 250 38 250 52 240 60 226 60 232 72 228 76 220 62 210 60 206 76 198 60 188 54 176 58 172 46 158 40 148 36 134 34Z" />
        <path d="M120 46 140 42 160 48 166 60 180 64 170 80 168 98 156 118 146 118 140 96 134 78 114 74 110 60Z" />
        <path d="M172 104 178 98 178 110 172 114ZM222 82 232 92 230 96 222 88ZM240 82 250 78 250 90 240 92ZM264 86 284 92 282 98 266 92Z" />
        <path d="M238 110 254 100 266 98 272 104 278 116 272 126 260 128 250 120 240 122ZM284 138 296 130M252 34 262 36 256 46ZM244 66 250 74 246 76Z" />
        <path d="M120 22 126 16 128 26ZM298 110 304 104 304 108Z" />
      </g>
    </World>
  );
}

/* ---------- charts ---------- */
const gridStroke = { stroke: "#151515", strokeWidth: 1, shapeRendering: "crispEdges" };
function Axis({ labels, x, right, ticks, tickY, top }) {
  return (
    <>
      {labels.map(([, y]) => <path key={y} d={`M${x} ${y}.5H${right}`} {...gridStroke} />)}
      {ticks.map((t) => <path key={t} d={`M${t}.5 ${top}V${tickY}`} {...gridStroke} />)}
      {labels.map(([t, y]) => (
        <g key={t}>
          <text x={x - 6} y={y + 6} textAnchor="end" fill="#dedede" fontSize="12" fontFamily={sans}>{t}</text>
          <path d={`M${x - 4} ${y}.5h4`} stroke="#fff" shapeRendering="crispEdges" />
        </g>
      ))}
    </>
  );
}
function ChartTitle({ x, y, w, children }) {
  return (
    <>
      <rect x={x - 4} y={y - 16} width={w} height="22" fill="#000" />
      <text x={x} y={y} fill="#d0d0d0" fontSize="15" fontWeight="600" fontFamily={sans}>{children}</text>
    </>
  );
}
const Ticks = ({ ticks, y }) => ticks.map((t) => <path key={t} d={`M${t}.5 ${y}v4`} stroke="#fff" shapeRendering="crispEdges" />);
const yearTicks = (x) => Array.from({ length: 12 }, (_, i) => Math.round(x + i * 31.8));

const BAR_TOPS = [54, 62, 55, 45, 65, 59, 66, 46, 53, 45, 42, 39, 48, 35, 51, 52, 45, 34, 34, 40, 27, 31];
function AnomalyChart() {
  const labels = [["0.5", 18], ["0.25", 38], ["0", 58], ["-0.25", 78], ["-0.5", 98]];
  const ticks = yearTicks(54);
  return (
    <svg viewBox="0 0 416 120" role="img" aria-label="Temperature Anomaly">
      <Axis labels={labels} x={54} right={404} ticks={ticks} tickY={106} top={6} />
      {BAR_TOPS.map((t, i) => {
        const x = Math.round(54 + i * 15.9);
        const w = Math.round(54 + (i + 1) * 15.9) - x;
        const below = t > 58;
        return <rect key={i} x={x + 0.5} y={below ? 58.5 : t + 0.5} width={w} height={Math.abs(58 - t)} fill={below ? "#5cb648" : "#4a5ab0"} stroke="#fff" />;
      })}
      <path d="M54 58.500H404" stroke="#fff" />
      <ChartTitle x={53} y={22} w={180}>Temperature Anomaly (°C)</ChartTitle>
      <Ticks ticks={ticks} y={106} />
    </svg>
  );
}
const CO2 = [[51, 80], [84, 78], [114, 76], [148, 74], [181, 72], [211, 68], [274, 63], [308, 59], [358, 54], [402, 51]];
function co2At(x) {
  for (let i = 1; i < CO2.length; i++) {
    const [x0, y0] = CO2[i - 1];
    const [x1, y1] = CO2[i];
    if (x <= x1) return y0 + ((y1 - y0) * (x - x0)) / (x1 - x0);
  }
  return 51;
}
function CarbonChart() {
  const labels = [["400", 8], ["380", 27], ["360", 46], ["340", 65], ["320", 84], ["300", 104]];
  const ticks = yearTicks(51);
  const trend = CO2.map((p) => p.join(" ")).join("L");
  const wave = Array.from({ length: 176 }, (_, i) => {
    const x = 51 + i * 2;
    return `${x} ${(co2At(x) - 3 * Math.sin(((x - 51) / 15.9) * Math.PI * 2)).toFixed(1)}`;
  }).join("L");
  return (
    <svg viewBox="0 0 413 116" role="img" aria-label="Carbon Dioxide">
      <Axis labels={labels} x={51} right={402} ticks={ticks} tickY={104} top={8} />
      <ChartTitle x={57} y={20} w={174}>Carbon Dioxide (ppm/yr)</ChartTitle>
      <path d={`M${trend}V104H51Z`} fill="#662123" />
      <path d={`M${wave}`} fill="none" stroke="#e65558" strokeWidth="1" />
      <path d={`M${trend}`} fill="none" stroke="#fb6366" strokeWidth="1.800" />
      <Ticks ticks={ticks} y={104} />
    </svg>
  );
}
const SUN = [46, 53, 50, 56, 58, 63, 60, 56, 45, 36, 36, 35, 45, 47, 56, 60, 60, 57, 50, 36, 38, 41, 44];
function SunChart() {
  const labels = [["1363", 8], ["1362", 32], ["1361", 56], ["1360", 80], ["1359", 104]];
  const ticks = SUN.map((_, i) => Math.round(55 + i * 15.9));
  const line = SUN.map((y, i) => `${ticks[i]} ${y}`).join("L");
  return (
    <svg viewBox="0 0 412 116" role="img" aria-label="Sun's Energy">
      <Axis labels={labels} x={55} right={405} ticks={ticks} tickY={104} top={8} />
      <ChartTitle x={57} y={19} w={179}>Sun’s Energy (W/m²)</ChartTitle>
      <path d={`M${line}V104H55Z`} fill="#b4711b" />
      <path d={`M${line}`} fill="none" stroke="#fff" strokeWidth="1.200" />
      <Ticks ticks={ticks} y={104} />
    </svg>
  );
}
const RungSet = ({ h }) => <Rungs $h={h}>{Array.from({ length: 12 }, (_, i) => <Rung key={i} />)}</Rungs>;

/* ---------- data ---------- */
const FEATURED = ["Global Summary of the Day", "Global Hourly Data", "Global Hourly Summaries", "Local Climatological Data", "Climate Predictions", "U.S. Historical Daily Snowfall"];
const METRICS = [
  { label: "Carbon Dioxde (ppm/yr)", value: "+10%", up: true, active: true },
  { label: <>Sun’s Energy (W/m<sup>2</sup>)</>, value: "-4%" },
  { label: "Temperature Anomoly (C)", value: "+4%", up: true, hand: true },
  { label: <>Ocean Heat Content (10<sup>22</sup> Joules)</>, value: "-.2%" },
  { label: "Surface Air Temperature", value: "+10%", up: true, wide: true },
  { label: "No. Hemisphere Snow Cover Anomolies", value: "-30%", wide: true },
];
const YEARS = ["1970", "1971", "1972", "1972", "1974", "1975", "1976", "1977", "1978", "1979", "1980"];
const LEGAL = ["Privacy Policy", "FOIA", "Information Quality", "Disclaimer", "USA.gov", "Ready.gov"];

function Year({ value, label, inset }) {
  return (
    <YearBox $inset={inset}>
      <YearSelect defaultValue={value} aria-label={label}>
        {[...new Set(YEARS)].map((y) => <option key={y}>{y}</option>)}
      </YearSelect>
      <UpDown />
    </YearBox>
  );
}
const Links = ({ items }) => items.map((t) => <li key={t}><a href="#">{t}</a></li>);

export default function App() {
  return (
    <Page>
      <Global />
      <Waves viewBox="0 0 1202 420" preserveAspectRatio="none" aria-hidden="true">
        <path d="M0 100C200 10 400 30 620 110S1100 200 1202 40V110C1100 240 760 200 520 120S180 50 0 150Z" fill="#fff" opacity=".85" />
        <g fill="none" stroke="#fff" strokeWidth="1.500" opacity=".45">
          {Array.from({ length: 14 }, (_, i) => (
            <path key={i} d={`M0 ${10 + i * 10}C300 ${-50 + i * 9} 560 ${90 + i * 5} 1202 ${-40 + i * 16}`} />
          ))}
          {Array.from({ length: 12 }, (_, i) => (
            <path key={`b${i}`} d={`M380 ${140 + i * 4}C700 ${10 + i * 7} 900 ${-20 + i * 9} 1202 ${100 + i * 12}`} />
          ))}
        </g>
      </Waves>

      <Header>
        <Brand href="#">
          <Logo>Cl<GoldI>i</GoldI>mate.<Gray>gov</Gray></Logo>
          <Motto>Science &amp; services for society</Motto>
        </Brand>
        <HeaderTools>
          <ShareRow>
            <ShareButton type="button">
              <svg width="10" height="10" viewBox="0 0 10 10" aria-hidden="true"><rect width="10" height="10" rx="2" fill="#fff" /><path d="M5 2v6M2 5h6" stroke="#6f8bc2" strokeWidth="1.400" /></svg>
              Share
            </ShareButton>
            <Bubble $w={34} $bold>489 k</Bubble>
          </ShareRow>
          <SiteSearch onSubmit={(e) => e.preventDefault()}>
            <SiteSearchBox>
              <SiteSearchInput placeholder="Search" aria-label="Search" />
              <Lens color="#c4c4c4" />
            </SiteSearchBox>
            <PlusButton type="submit" aria-label="Search options">
              <svg width="18" height="18" viewBox="0 0 18 18" aria-hidden="true"><circle cx="9" cy="9" r="8.500" fill="#fff" stroke="#888" /><circle cx="9" cy="9" r="6" fill="#4a4a4a" /><path d="M9 5v8M5 9h8" stroke="#fff" strokeWidth="2" /></svg>
            </PlusButton>
          </SiteSearch>
        </HeaderTools>
      </Header>

      <Nav>
        <HomeLink href="#" aria-label="Home">
          <svg width="21" height="20" viewBox="0 0 21 20" fill="#a8a8a8" aria-hidden="true"><path d="M10.500 1 20 11H17.500V18.500H12.500V12.500H8.500V18.500H3.500V11H1Z" /></svg>
        </HomeLink>
        <Tab href="#" $w={146}>News &amp; Features</Tab>
        <Tab href="#" $w={162}>Climate Conditions</Tab>
        <Tab href="#" $w={184} $active>Finding &amp; Using Data +</Tab>
        <Tab href="#" $w={149}>Teaching Climate</Tab>
        <Tab href="#" $w={155}>Tools &amp; Resources</Tab>
        <Utility><a href="#">about</a> | <a href="#">faq</a> | <a href="#">site map</a></Utility>
      </Nav>

      <Sheet>
        <SubHeader>
          <SubHeaderInner>
            <Lead>Easy access to climate data, products and services</Lead>
            <Browse>
              <BrowseLabel>Browse By :</BrowseLabel>
              <a href="#">Popular Topics</a>
              <a href="#">Climate System</a>
              <a href="#">Observation Platforms</a>
              <a href="#">Climate Services</a>
            </Browse>
          </SubHeaderInner>
        </SubHeader>

        <Columns>
          <Column>
            <HeadingRow $inset={4} $gap={23}>
              <Heading>Integrated Map &amp; Apps</Heading>
              <Dots>{[0, 1, 2, 3, 4].map((i) => <Dot key={i} $on={i === 2} aria-label={`Slide ${i + 1}`} />)}</Dots>
            </HeadingRow>
            <MapCard>
              <MapTitle><a href="#">Tracks Of Major Hurricanes of the Western Hemisphere »</a></MapTitle>
              <HurricaneMap />
              <MapFoot>
                <MapText>Access multiple layers of free, searchable climate data quickly and<br />easily through the integrated data set map application</MapText>
                <GoButton type="button">Go To Map Now »</GoButton>
              </MapFoot>
            </MapCard>
          </Column>

          <Column>
            <HeadingRow $inset={2} $gap={5}>
              <svg width="27" height="24" viewBox="0 0 27 24" fill="none" aria-hidden="true">
                <path d="M1 6v14h18" stroke="#a9bddb" strokeWidth="2" />
                <path d="M2 6h16v13H2Z" fill="#eef3fa" />
                <path d="M4 16l3-4 3 3 3-4" stroke="#b9c8de" />
                <circle cx="17" cy="7" r="6" stroke={blue} strokeWidth="2.200" fill="#fff" />
                <path d="M17 4v6M14 7h6" stroke={blue} strokeWidth="1.600" />
                <path d="M21 11.500 25.500 16" stroke={blue} strokeWidth="3" />
              </svg>
              <Heading>Find Data</Heading>
            </HeadingRow>
            <FindCard>
              <DottedWorld />
              <FindIntro>Search data sets and products using the fields below</FindIntro>
              <TopicForm onSubmit={(e) => e.preventDefault()}>
                <TopicInput placeholder="Enter Topic Of Interest..." aria-label="Topic of interest" />
                <TopicButton type="submit" aria-label="Search topics"><Lens size={13} w={2.4} /></TopicButton>
              </TopicForm>
              <FindList>
                {["Add a time range", "Define a location", "Browse Library"].map((t) => (
                  <li key={t}><FindLink href="#"><PlusDisc />{t}</FindLink></li>
                ))}
              </FindList>
              <Advanced href="#">Advanced Search »</Advanced>
            </FindCard>
            <FeaturedCard>
              <Heading>Featured Products</Heading>
              <FeaturedList>
                {FEATURED.map((t, i) => (
                  <FeaturedItem key={t} $hot={i === 5}>
                    <a href="#">{t} »</a>
                    {i === 5 && <HandCursor x={164} y={8} />}
                  </FeaturedItem>
                ))}
              </FeaturedList>
              <ViewAll href="#">view all »</ViewAll>
            </FeaturedCard>
          </Column>
        </Columns>

        <Dashboard>
          <Picker>
            <DashTitle>Global Climate Dashboard</DashTitle>
            <DashSub>A data-driven quick look at the state of Earth's climate system</DashSub>
            <DragLine>
              Select data type &amp; drag to load graph.
              <Help type="button">
                ?
                <Tip width="74" height="36" viewBox="0 0 74 36" aria-hidden="true">
                  <path d="M4 1H69a3 3 0 0 1 3 3V25a3 3 0 0 1-3 3H17L11 35 5 28H4a3 3 0 0 1-3-3V4a3 3 0 0 1 3-3Z" fill="#1c2b44" stroke="#0f1828" />
                  <path d="M5 7h15M5 12h15M5 17h15" stroke="#536380" strokeWidth="2" />
                  <path d="M5 22.500h15" stroke="#b8c0cc" strokeWidth="2" />
                  <path d="M25 17C30 13 35 13 42 14M36 8 42 14 38 20" stroke="#a4acba" strokeWidth="3" fill="none" />
                  <path d="M48 7h19M48 14h19M48 21.500h19" stroke="#fff" strokeWidth="5.500" />
                </Tip>
                <HandCursor x={2} y={38} />
              </Help>
            </DragLine>
            <TypeTabs>
              <TypeTab $w={123} $on>▾ Climate Change</TypeTab>
              <TypeTab $w={133}>Climate Variability</TypeTab>
              <TypeTab $w={153}>Climate Projections</TypeTab>
            </TypeTabs>
            <Rows>
              {METRICS.map((m, i) => (
                <Row key={i} $active={m.active}>
                  <RowBody $active={m.active}>
                    <RowLabel>{m.label}</RowLabel>
                    <Led $up={m.up} $wide={m.wide}>{m.value}</Led>
                  </RowBody>
                  <RowButton type="button" $active={m.active} aria-label="Load graph">
                    {m.active ? (
                      <svg width="25" height="23" viewBox="0 0 25 23" fill="none" stroke="#e6ecf4" strokeWidth="1.600" aria-hidden="true">
                        <path d="M10 5 12.500 2 15 5M10 18 12.500 21 15 18M4 9 1.500 12 4 15M21 9 23.500 12 21 15" />
                      </svg>
                    ) : (
                      <svg width="9" height="12" viewBox="0 0 9 12" aria-hidden="true"><path d="M0 0 9 6 0 12Z" fill="#2c4260" /></svg>
                    )}
                  </RowButton>
                  {m.active && <HandCursor x={428} y={16} />}
                  {m.hand && <HandCursor x={48} y={17} />}
                </Row>
              ))}
            </Rows>
          </Picker>

          <Viewer>
            <Hatch />
            <ViewerBody>
              <DateRow>
                <DateLabel>Select Date Range</DateLabel>
                <Year value="1970" label="From year" inset={8} />
                <To>to</To>
                <Year value="1980" label="To year" inset={5} />
              </DateRow>
              <Timeline>
                <Lens size={7} color="#d8d8d8" />
                {YEARS.map((y, i) => <span key={i}>{y}</span>)}
              </Timeline>
              <RungSet h={12} />
              <ChartFrame $active $right={0}>
                <DragTab type="button" aria-label="Reorder graph">
                  <UpDown gap={6} />
                  <HandCursor x={9} y={27} />
                </DragTab>
                <AnomalyChart />
              </ChartFrame>
              <RungSet h={6} />
              <ChartFrame $right={2}><CarbonChart /></ChartFrame>
              <RungSet h={6} />
              <ChartFrame $right={3}><SunChart /></ChartFrame>
            </ViewerBody>
          </Viewer>
        </Dashboard>
      </Sheet>

      <Footer>
        <FootLogo>Climate<small>.gov</small></FootLogo>
        <FootList $size={14} $weight={500} $line={24}><Links items={["Climate Conditions", "News & Features", "Finding & Using Data", "Teaching Climate"]} /></FootList>
        <FootList $size={14} $weight={600} $line={22} $top={2}><Links items={["For Teachers", "For Policy Makers", "For Administrators", "Our Partners »", "About Climate.gov Portal"]} /></FootList>
        <FootList $size={12} $weight={600} $line={14} $top={9}><Links items={["Site Links", "Home", "Site Map", "Acknowledgments", "Information Quality", "Freedom of Information Quality Act (FOIA)", "Privacy Policy"]} /></FootList>
        <News onSubmit={(e) => e.preventDefault()}>
          <NewsText htmlFor="email">Keep me up to date. Notify me when Climate.gov<br />adds content, announcements and new features.</NewsText>
          <NewsRow>
            <Email id="email" type="email" placeholder="Enter Your Email Address" />
            <Subscribe type="submit">Subscribe</Subscribe>
          </NewsRow>
          <Social>
            <SocialPair $gap={7}>
              <SocialButton type="button" $w={47} $ink="#98a6c4">
                <svg width="12" height="12" viewBox="0 0 12 12" aria-hidden="true"><rect width="12" height="12" fill="#8fa1c8" /><path d="M10 2.500H8.500Q7 2.500 7 4V12M5 6.500h5" stroke="#fff" strokeWidth="1.600" fill="none" /></svg>
                Like
              </SocialButton>
              <Bubble $w={22} $line="#ddd" $ink="#999" $bold>26</Bubble>
            </SocialPair>
            <SocialPair $gap={10}>
              <SocialButton type="button" $w={55} $ink="#86aac8" $bg="#eef5fa" $bold>
                <svg width="12" height="11" viewBox="0 0 12 11" fill="#7dbfe2" aria-hidden="true"><path d="M0 9Q3 9 4 8 1 7 1 5L5 5Q5 2 7 0 8 2 7.500 3.500 9 2 12 2 11 3 10.500 5 9 10 5 10 2 10.500 0 9Z" /></svg>
                Tweet
              </SocialButton>
              <Bubble $w={31} $line="#d5e4ee" $ink="#84a4bb">97</Bubble>
            </SocialPair>
            <SocialPair $gap={8}>
              <SocialButton type="button" $w={32} $ink="#8fb0e8" $bg="linear-gradient(to right, #f5a8a8 0 25%, #a9cdf0 25% 50%, #b9e2ae 50% 75%, #fbe59c 75%) top / 100% 3px no-repeat, #f2f2f2" $bold>+1</SocialButton>
              <Bubble $w={29} $line="#e4e4e4" $ink="#a9a9a9">56</Bubble>
            </SocialPair>
            <SocialPair $gap={0}>
              <SocialButton type="button" $w={50} $ink="#fff" $bg="#fbb8a8" $line="#f7ab9a" $bold>
                <svg width="9" height="10" viewBox="0 0 9 10" aria-hidden="true"><rect width="9" height="10" rx="2" fill="#fff" /><path d="M4.500 2v6M2 5h5" stroke="#f59c88" strokeWidth="1.400" /></svg>
                Share
              </SocialButton>
              <Bubble $w={34} $line="#e4e4e4" $ink="#888">489</Bubble>
            </SocialPair>
          </Social>
        </News>
        <Legal>
          {LEGAL.map((t, i) => (
            <React.Fragment key={t}>{i > 0 && " | "}<a href="#">{t}</a></React.Fragment>
          ))}
        </Legal>
      </Footer>
    </Page>
  );
}
